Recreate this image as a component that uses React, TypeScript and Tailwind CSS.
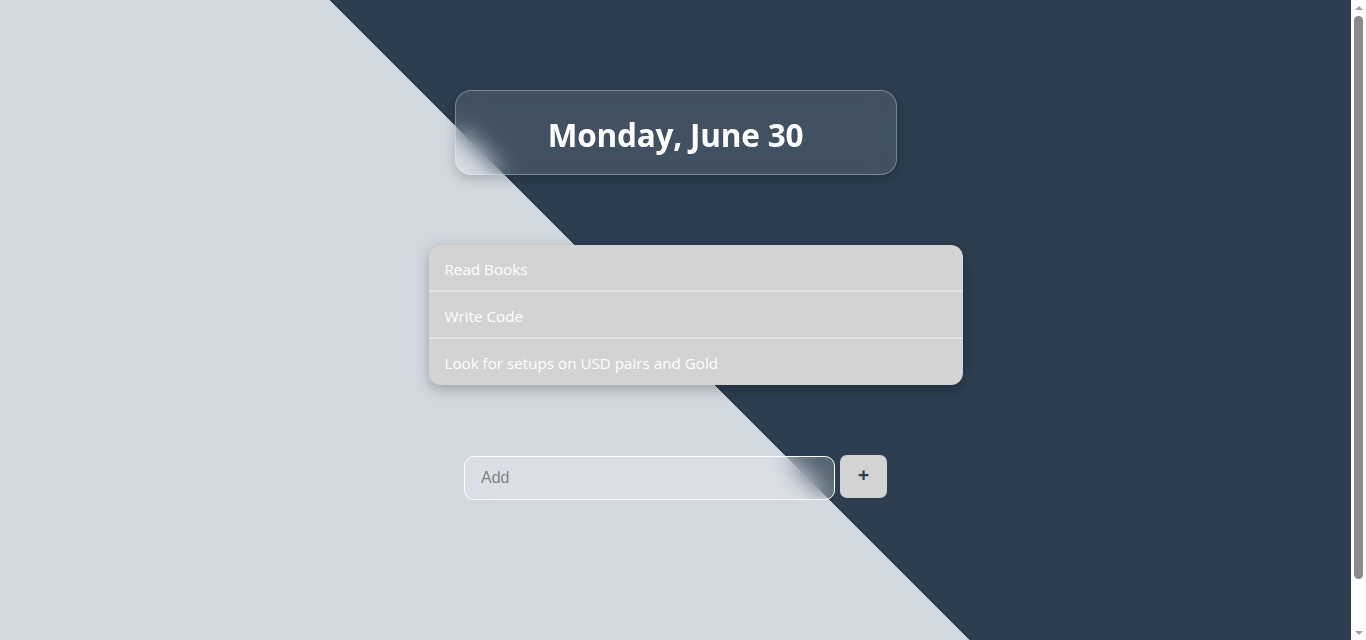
import React from "react";

function FakeScrollbar() {
  return (
    <div className="w-[15px] h-[640px] shrink-0 bg-white flex flex-col items-center">
      <div className="h-[15px] flex items-center justify-center">
        <div className="w-0 h-0 border-l-[4px] border-r-[4px] border-b-[4px] border-l-transparent border-r-transparent border-b-[#a3a3a3]" />
      </div>
      <div className="flex-1 w-full px-[3px] pt-[1px] pb-[46px]">
        <div className="w-full h-full rounded-full bg-[#8a8a8a]" />
      </div>
      <div className="h-[15px] flex items-center justify-center">
        <div className="w-0 h-0 border-l-[4px] border-r-[4px] border-t-[4px] border-l-transparent border-r-transparent border-t-[#a3a3a3]" />
      </div>
    </div>
  );
}

export default function App() {
  const tasks = ["Read Books", "Write Code", "Look for setups on USD pairs and Gold"];
  return (
    <div className="h-[640px] w-full flex items-start overflow-hidden">
      <div
        className="w-[1351px] h-[691px] shrink-0 flex flex-col items-center bg-[linear-gradient(45deg,#d1d8e0_50%,#2c3e50_50%)]"
        style={{ fontFamily: '"Open Sans", "Noto Sans", sans-serif' }}
      >
        <div className="mt-[90px] w-[442px] h-[85px] flex items-center justify-center pt-[4px] rounded-[16px] border border-white/30 bg-white/10 backdrop-blur-[12px] shadow-[0_4px_12px_rgba(0,0,0,0.2)]">
          <h1 className="text-[31.5px] font-bold text-white leading-none tracking-[-0.2px]">Monday, June 30</h1>
        </div>

        <ul className="mt-[70px] pl-10 w-[574px]">
          <div className="rounded-[12px] bg-[#d3d3d3] shadow-[0_4px_14px_rgba(0,0,0,0.25)] overflow-hidden">
            {tasks.map((t, i) => (
              <li
                key={t}
                className={`list-none flex items-center px-4 pt-[3px] text-[15.2px] text-white ${i < tasks.length - 1 ? "h-[47px] border-b-2 border-[#e2e2e2]" : "h-[46px]"}`}
              >
                {t}
              </li>
            ))}
          </div>
        </ul>

        <div className="mt-[71px] flex items-start gap-[5px]">
          <input
            placeholder="Add"
            className="w-[371px] h-[44px] rounded-[10px] border border-white bg-white/20 backdrop-blur-[12px] px-4 text-[16px] outline-none placeholder:text-[#808080]"
            style={{ fontFamily: '"Liberation Sans", Arial, sans-serif' }}
          />
          <button className="-mt-px w-[47px] h-[43px] rounded-[7px] bg-[#d3d3d3] text-[#2c3e50] text-[20px] font-bold leading-none flex items-center justify-center pb-[3px]">
            +
          </button>
        </div>
      </div>
      <FakeScrollbar />
    </div>
  );
}
